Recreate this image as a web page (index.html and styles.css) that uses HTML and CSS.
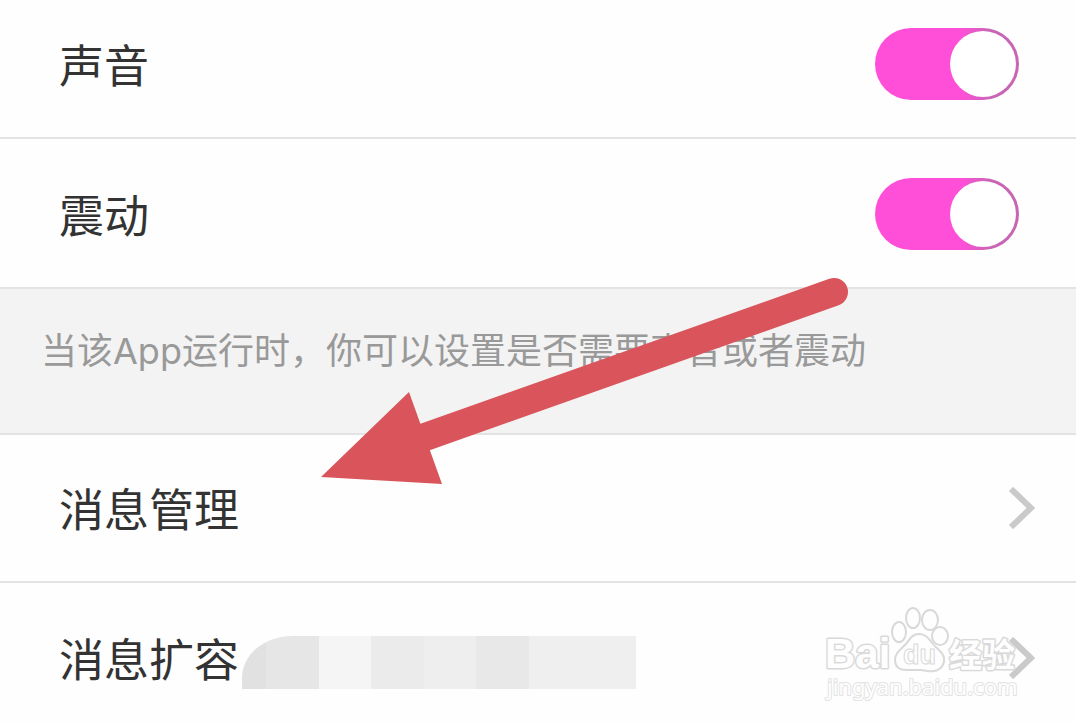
FILE: index.html
```html
<!DOCTYPE html>
<html lang="zh-CN">
<head>
    <meta charset="UTF-8">
    <meta name="viewport" content="width=device-width, initial-scale=1.0">
    <title>消息设置</title>
    <link rel="stylesheet" href="styles.css">
</head>
<body>
    <main class="settings">
        <div class="row row-first">
            <label for="sound">声音</label>
            <input type="checkbox" class="switch" id="sound" checked>
        </div>
        <div class="row">
            <label for="vibrate">震动</label>
            <input type="checkbox" class="switch" id="vibrate" checked>
        </div>
        <p class="note">当该App运行时，你可以设置是否需要声音或者震动</p>
        <a class="row row-link" href="#manage">
            <span>消息管理</span>
            <svg class="chevron" viewBox="0 0 26 42"><path d="M2 2 L22 21 L2 40"/></svg>
        </a>
        <a class="row row-link row-last" href="#capacity">
            <span>消息扩容</span>
            <span class="masked"></span>
            <svg class="chevron" viewBox="0 0 26 42"><path d="M2 2 L22 21 L2 40"/></svg>
        </a>

        <!-- pointer to the message management row -->
        <svg class="arrow" viewBox="0 0 528 208">
            <path class="shaft" d="M90 165 L513 15"/>
            <path d="M0 200 L88 115 L121 207 Z"/>
        </svg>

        <svg class="watermark" viewBox="0 0 200 100">
            <text class="wm-latin" x="3" y="66">Bai</text>
            <g class="paw">
                <ellipse cx="77" cy="30" rx="7" ry="10"/>
                <ellipse cx="91" cy="16" rx="7" ry="10"/>
                <ellipse cx="108" cy="18" rx="8" ry="10"/>
                <ellipse cx="118" cy="34" rx="8" ry="9"/>
                <path d="M97 32 C90 32 88 37 84 42 C79 47 73 51 73 58 C73 65 78 68 84 68 C90 68 93 68 98 68 C103 68 107 70 112 69 C119 68 123 62 122 56 C121 50 115 47 111 42 C107 37 104 32 97 32 Z"/>
            </g>
            <text class="wm-du" x="81" y="62">du</text>
            <text class="wm-cjk" x="127" y="65">经验</text>
            <text class="wm-url" x="5" y="93">jingyan.baidu.com</text>
        </svg>
    </main>
</body>
</html>
```
FILE: styles.css
```css
* {
    box-sizing: border-box;
}
body {
    margin: 0;
    background-color: #fefefe;
    color: #333;
    font-family: 'Noto Sans CJK SC', sans-serif;
}
.settings {
    position: relative;
    overflow: hidden;
}
.row {
    display: flex;
    align-items: center;
    padding: 39px 57px 37px 59px;
    border-bottom: 2px solid #e3e3e3;
    font-size: 45px;
    line-height: 72px;
}
.row-first {
    padding-top: 28px;
}
.row-link {
    padding: 37px 41px 37px 59px;
    color: inherit;
    text-decoration: none;
}
.row-last {
    padding-top: 39px;
    padding-bottom: 30px;
    border-bottom: none;
}

/* toggle */
.switch {
    appearance: none;
    display: flex;
    justify-content: flex-end;
    width: 144px;
    height: 72px;
    margin: 0 0 0 auto;
    padding: 3px;
    border-radius: 36px;
    background: linear-gradient(to right, #ff4fd8 60%, #c965b5 80%);
    cursor: pointer;
}
.switch::before {
    content: "";
    width: 66px;
    height: 66px;
    border-radius: 50%;
    background-color: #fff;
}
.switch:not(:checked) {
    justify-content: flex-start;
    background: #ddd;
}

.note {
    margin: 0;
    padding: 36px 41px 56px;
    background-color: #f3f3f3;
    border-bottom: 2px solid #e3e3e3;
    color: #999;
    font-family: Inter, 'Noto Sans CJK SC', sans-serif;
    font-size: 36px;
    line-height: 52px;
}
.chevron {
    width: 26px;
    height: 42px;
    margin-left: auto;
    fill: none;
    stroke: #cacaca;
    stroke-width: 6;
}
.masked {
    width: 394px;
    height: 53px;
    margin: 8px 0 0 3px;
    border-top-left-radius: 50px 42px;
    background: linear-gradient(to right,
        #e1e1e1 24px, #e6e6e6 24px 77px, #f5f5f5 77px 129px, #ebebeb 129px 182px,
        #eeeeee 182px 234px, #e8e8e8 234px 287px, #efefef 287px);
}

/* overlays */
.arrow {
    position: absolute;
    left: 321px;
    top: 277px;
    width: 528px;
    height: 208px;
    fill: #d9555b;
    pointer-events: none;
}
.shaft {
    stroke: #d9555b;
    stroke-width: 28;
    stroke-linecap: round;
}
.watermark {
    position: absolute;
    right: 54px;
    top: 602px;
    width: 200px;
    height: 100px;
    fill: #fefefe;
    stroke: #d9d9d9;
    stroke-width: 1;
    pointer-events: none;
}
.wm-latin {
    font: bold 42px 'Liberation Sans', sans-serif;
    stroke-width: 3;
    stroke-linejoin: round;
    paint-order: stroke;
}
.wm-du {
    font: bold 27px 'Liberation Sans', sans-serif;
}
.wm-cjk {
    font: bold 33px 'Noto Sans CJK SC', sans-serif;
    stroke-width: 3;
    stroke-linejoin: round;
    paint-order: stroke;
}
.wm-url {
    font: 22px 'Noto Sans', sans-serif;
    stroke: #e3e3e3;
    stroke-width: 2;
    stroke-linejoin: round;
    paint-order: stroke;
}
.paw {
    stroke-width: 2;
}
```
